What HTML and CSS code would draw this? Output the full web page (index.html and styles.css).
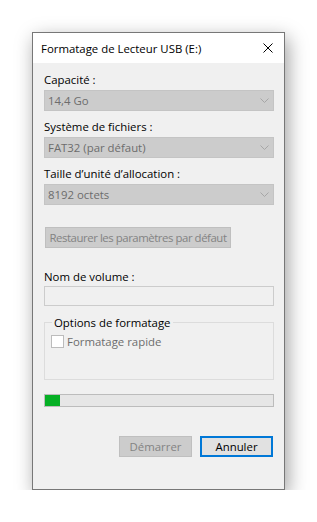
FILE: index.html
```html
<!DOCTYPE html>
<html lang="fr">
<head>
<meta charset="utf-8">
<title>Formatage</title>
<link rel="stylesheet" href="styles.css">
</head>
<body>
<div class="window">
  <div class="titlebar">
    <span class="title">Formatage de Lecteur USB (E:)</span>
    <svg class="close" width="10" height="10" viewBox="0 0 10 10"><path d="M0.5 0.5 L9.5 9.5 M9.5 0.5 L0.5 9.5" stroke="#000" stroke-width="1" fill="none"/></svg>
  </div>
  <div class="content">
    <div class="label first">Capacité :</div>
    <div class="combo"><span>14,4 Go</span><svg class="chev" width="9" height="5" viewBox="0 0 9 5"><path d="M0.5 0.5 L4.5 4.5 L8.5 0.5" stroke="#a6a6a6" fill="none"/></svg></div>
    <div class="label">Système de fichiers :</div>
    <div class="combo"><span>FAT32 (par défaut)</span><svg class="chev" width="9" height="5" viewBox="0 0 9 5"><path d="M0.5 0.5 L4.5 4.5 L8.5 0.5" stroke="#a6a6a6" fill="none"/></svg></div>
    <div class="label">Taille d’unité d’allocation :</div>
    <div class="combo"><span>8192 octets</span><svg class="chev" width="9" height="5" viewBox="0 0 9 5"><path d="M0.5 0.5 L4.5 4.5 L8.5 0.5" stroke="#a6a6a6" fill="none"/></svg></div>
    <div class="btn restore disabled">Restaurer les paramètres par défaut</div>
    <div class="label volume">Nom de volume :</div>
    <div class="textbox"></div>
    <div class="group">
      <div class="legend">Options de formatage</div>
      <div class="check"><span class="box"></span><span class="checktext">Formatage rapide</span></div>
    </div>
    <div class="progress"><div class="fill" style="width:15px"></div></div>
    <div class="buttons">
      <div class="btn disabled">Démarrer</div>
      <div class="btn default">Annuler</div>
    </div>
  </div>
</div>
</body>
</html>
```
FILE: styles.css
```css
html, body {
  margin: 0;
  padding: 0;
  background: #ffffff;
}
body {
  font-family: "Open Sans", "Noto Sans", sans-serif;
  font-size: 11.4px;
  color: #000;
  white-space: nowrap;
}
.window {
  margin: 32px 0 0 32px;
  width: 251px;
  height: 456px;
  border: 1px solid #777777;
  background: #f0f0f0;
  box-shadow: 3px 6px 18px rgba(0, 0, 0, 0.38);
  display: flex;
  flex-direction: column;
}
.titlebar {
  height: 30px;
  background: #ffffff;
  display: flex;
  align-items: center;
  justify-content: space-between;
  padding: 0 11px 0 8px;
}
.title {
  line-height: 15px;
}
.close {
  display: block;
}
.content {
  padding: 0 10px 0 11px;
  display: flex;
  flex-direction: column;
}
.label {
  line-height: 15px;
  height: 15px;
  margin-top: 8px;
}
.label.first {
  margin-top: 9px;
}
.combo {
  margin-top: 3px;
  height: 19px;
  border: 1px solid #c4c4c4;
  background: #cccccc;
  color: #6d6d6d;
  display: flex;
  align-items: center;
  justify-content: space-between;
  padding: 0 4px 0 3px;
}
.chev {
  display: block;
}
.btn {
  height: 19px;
  border: 1px solid #adadad;
  background: #e1e1e1;
  display: flex;
  align-items: center;
  justify-content: center;
}
.btn.disabled {
  border-color: #bfbfbf;
  background: #cccccc;
  color: #838383;
}
.restore {
  margin-top: 22px;
  margin-left: 1px;
  width: 184px;
  letter-spacing: -0.45px;
}
.label.volume {
  margin-top: 21px;
}
.textbox {
  margin-top: 2px;
  height: 18px;
  border: 1px solid #cccccc;
  background: #f0f0f0;
}
.group {
  margin-top: 16px;
  height: 56px;
  border: 1px solid #dcdcdc;
  position: relative;
  padding-left: 6px;
}
.legend {
  position: absolute;
  top: -8px;
  left: 7px;
  background: #f0f0f0;
  padding: 0 2px;
  line-height: 15px;
}
.check {
  margin-top: 11px;
  display: flex;
  align-items: center;
  color: #6d6d6d;
}
.box {
  width: 11px;
  height: 11px;
  border: 1px solid #bcbcbc;
  background: #ffffff;
}
.checktext {
  margin-left: 3px;
  line-height: 15px;
}
.progress {
  margin-top: 14px;
  height: 11px;
  border: 1px solid #bcbcbc;
  background: #e6e6e6;
}
.fill {
  height: 100%;
  background: #06b025;
}
.buttons {
  margin-top: 29px;
  display: flex;
  justify-content: flex-end;
  gap: 8px;
  padding-right: 1px;
}
.buttons .btn {
  width: 71px;
}
.btn.default {
  border: 2px solid #0078d7;
  height: 17px;
  width: 69px;
}
```
